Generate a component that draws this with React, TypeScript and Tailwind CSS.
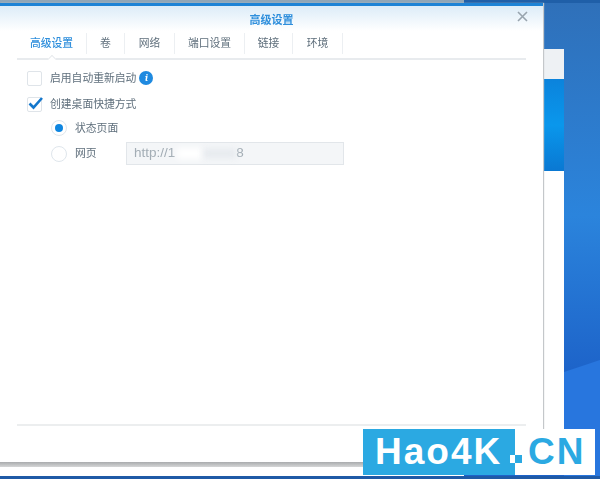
import React from "react";

const font = { fontFamily: '"Liberation Sans","Noto Sans CJK SC",sans-serif' };
const tabs = [
  { label: "高级设置", w: "w-[70px]", active: true },
  { label: "卷", w: "w-[38px]" },
  { label: "网络", w: "w-[50px]" },
  { label: "端口设置", w: "w-[70px]" },
  { label: "链接", w: "w-[48px]" },
  { label: "环境", w: "w-[50px]" },
];

function Radio({ on }: { on?: boolean }) {
  return (
    <span className="flex h-[16px] w-[16px] items-center justify-center rounded-full border border-[#dfe6ec] bg-white">
      {on && <span className="h-[8px] w-[8px] rounded-full bg-[#0f86e0]" />}
    </span>
  );
}

export default function App() {
  return (
    <div
      className="relative h-[479px] w-[600px] overflow-hidden bg-[linear-gradient(to_bottom,#2f70b9_0%,#2b84dc_45%,#1d63c9_78%)] text-[10.8px] text-[#5f6f7c]"
      style={font}
    >
      <svg className="absolute left-[564px] top-[360px]" width="36" height="119" viewBox="0 0 36 119">
        <polygon points="0,12 36,0 36,119 0,119" fill="#2876de" />
      </svg>

      {/* top strip */}
      <div className="absolute left-0 top-0 h-[3px] w-[464px] bg-[#8fa6b8]" />
      <div className="absolute left-[464px] top-0 h-[3px] w-[136px] bg-[#1f5fa8]" />

      {/* window behind */}
      <div className="absolute left-[500px] top-[49px] flex h-[390px] w-[64px] flex-col blur-[0.4px]">
        <div className="h-[30px] bg-[#eef1f4]" />
        <div className="h-[92px] bg-gradient-to-b from-[#0b83dc] via-[#0a97ec] to-[#0a78d2]" />
        <div className="flex-1 bg-white" />
      </div>

      {/* main dialog */}
      <div className="absolute left-0 top-[3px] flex h-[459px] w-[543px] flex-col border-t-[3px] border-[#1d83d6] bg-white shadow-[1px_0_1px_#c4c7ca] blur-[0.6px]">
        <div className="relative flex h-[25px] items-center justify-center bg-gradient-to-b from-[#dcecf8] to-white pt-[3px] text-[11px] text-[#2f8fdc]">
          <span className="font-semibold">高级设置</span>
          <svg className="absolute left-[517px] top-[5px]" width="11" height="11" viewBox="0 0 11 11">
            <path d="M1 1L10 10M10 1L1 10" stroke="#98a4ae" strokeWidth="1.6" />
          </svg>
        </div>

        <div className="relative mx-[17px] flex h-[29px] w-[509px] border-b-2 border-[#e8ebee] pt-[2px]">
          {tabs.map((t) => (
            <div
              key={t.label}
              className={`flex h-[21px] items-center justify-center border-r border-[#eceff2] ${t.w} ${t.active ? "font-medium text-[#2f8fdc]" : ""}`}
            >
              {t.label}
            </div>
          ))}
          <span className="absolute left-[32px] top-[25px] h-[6px] w-[6px] rotate-45 border-l border-t border-[#e8ebee] bg-white" />
        </div>

        <div className="flex flex-1 flex-col pl-[27px] pt-[10px]">
          <div className="flex h-[16px] items-center gap-[8px]">
            <span className="h-[15px] w-[15px] rounded-[2px] border border-[#dfe4e9] bg-white" />
            <span>启用自动重新启动</span>
            <span className="-ml-[5px] flex h-[14px] w-[14px] items-center justify-center rounded-full bg-[#1f8ae0] font-serif text-[10px] font-bold italic text-white">
              i
            </span>
          </div>
          <div className="mt-[10px] flex h-[16px] items-center gap-[8px]">
            <span className="relative h-[15px] w-[15px] rounded-[2px] border border-[#dfe4e9] bg-white">
              <svg className="absolute -left-[1px] -top-[3px]" width="18" height="16" viewBox="0 0 18 16">
                <path d="M2.5 8.5L6.5 12.5L15 3" fill="none" stroke="#1477cc" strokeWidth="2.6" />
              </svg>
            </span>
            <span>创建桌面快捷方式</span>
          </div>
          <div className="mt-[8px] flex h-[16px] items-center gap-[8px] pl-[24px]">
            <Radio on />
            <span className="pt-[1px]">状态页面</span>
          </div>
          <div className="mt-[2px] flex h-[31px] items-center pl-[24px]">
            <Radio />
            <span className="ml-[8px] w-[51px]">网页</span>
            <div className="flex h-[23px] w-[218px] items-center border border-[#e2e6ea] bg-[#f4f6f8] pl-[7px] text-[13.5px] text-[#a3adb5]">
              <span>http://1</span>
              <span className="ml-[2px] h-[11px] w-[26px] bg-white blur-[3px]" />
              <span className="h-[9px] w-[33px] bg-[#e6eaee] blur-[3px]" />
              <span>8</span>
            </div>
          </div>
          <div className="mt-auto mb-[36px] -ml-[10px] h-[2px] w-[509px] bg-[#eceeef]" />
        </div>
      </div>

      {/* shadow + below */}
      <div className="absolute left-0 top-[462px] h-[5px] w-[364px] bg-gradient-to-b from-[#a9abad] to-[#d5d6d7]" />
      <div className="absolute left-0 top-[467px] h-[9px] w-[464px] bg-white" />
      <div className="absolute left-0 top-[476px] h-[3px] w-[600px] bg-[#1f5aa6]" />

      {/* watermark */}
      <div className="absolute left-[363px] top-[429px] flex h-[46px] w-[232px] items-stretch text-[37px] font-bold tracking-[2px]">
        <div className="relative flex w-[152px] items-center bg-[#2ba9e2] pl-[12px] text-white">
          Hao4K
          <span className="absolute left-[147px] top-[26px] h-[8px] w-[5px] bg-white" />
        </div>
        <div className="relative flex flex-1 items-center bg-white pl-[13px] text-[#2ba9e2]">
          CN
          <span className="absolute left-0 top-[26px] h-[8px] w-[7px] bg-[#2ba9e2]" />
        </div>
      </div>
    </div>
  );
}
